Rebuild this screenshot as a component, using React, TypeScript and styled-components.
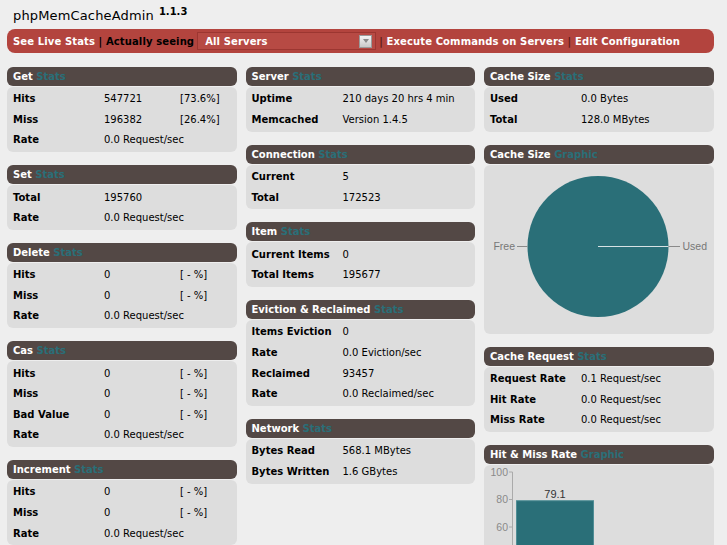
import React from "react";
import styled, { createGlobalStyle } from "styled-components";

const GlobalStyle = createGlobalStyle`
  html, body {
    margin: 0;
    padding: 0;
    background: #eeeeee;
    font-family: "DejaVu Sans", Verdana, sans-serif;
    color: #000;
  }
`;

const Page = styled.div`
  padding: 0 13px 0 7px;
`;

const Title = styled.div`
  height: 29px;
  box-sizing: border-box;
  padding: 7.5px 0 0 6px;
  font-size: 13px;
  line-height: 16px;
  letter-spacing: 0.15px;
  color: #000;
`;

const Version = styled.sup`
  font-size: 10px;
  font-weight: bold;
  letter-spacing: 0;
  margin-left: 5px;
  vertical-align: 5px;
  line-height: 0;
`;

const NavBar = styled.div`
  height: 24px;
  border-radius: 8px;
  background: #b3443e;
  display: flex;
  align-items: center;
  padding: 0 6px;
  font-size: 10px;
  font-weight: bold;
  letter-spacing: 0.12px;
  white-space: pre;
`;

const NavLink = styled.span`
  color: #ffffff;
`;

const NavText = styled.span<{ $tone?: "dark" | "red" }>`
  color: ${(p) => (p.$tone === "red" ? "#5e1a16" : "#000")};
`;

const SelectBox = styled.div`
  width: 179px;
  height: 18px;
  box-sizing: border-box;
  margin: 0 3px 0 3px;
  border: 1px solid #9c3631;
  background: #b74a44;
  display: flex;
  align-items: center;
  justify-content: space-between;
  padding: 0 3px 0 7px;
  color: #fff;
`;

const SelectArrow = styled.span`
  width: 13px;
  height: 13px;
  box-sizing: border-box;
  border: 1px solid #9a9a9a;
  background: linear-gradient(#f4f4f4, #c9c9c9);
  display: flex;
  align-items: center;
  justify-content: center;
  &::after {
    content: "";
    border-left: 3px solid transparent;
    border-right: 3px solid transparent;
    border-top: 4px solid #8a8a8a;
  }
`;

const Grid = styled.div`
  margin-top: 14px;
  display: grid;
  grid-template-columns: repeat(3, 1fr);
  column-gap: 9px;
  align-items: start;
`;

const Column = styled.div`
  display: flex;
  flex-direction: column;
`;

const Panel = styled.div`
  margin-bottom: 13px;
`;

const PanelHeader = styled.div`
  height: 19px;
  line-height: 19px;
  border-radius: 6px;
  background: #534845;
  color: #ffffff;
  font-size: 10px;
  font-weight: bold;
  padding-left: 6px;
`;

const Accent = styled.span`
  color: #2a6f78;
`;

const PanelBody = styled.div<{ $height?: number }>`
  margin-top: 1px;
  background: #dddddd;
  border-radius: 6px;
  padding: 1.5px 0 2px;
  ${(p) => (p.$height ? `height: ${p.$height}px; padding: 0; overflow: hidden;` : "")}
`;

const Row = styled.div`
  height: 20.6px;
  display: grid;
  grid-template-columns: 91px 76px 1fr;
  align-items: center;
  padding-left: 6px;
  font-size: 10px;
  white-space: nowrap;
`;

const Label = styled.span`
  font-weight: bold;
  color: #000;
`;

const Value = styled.span<{ $span?: boolean }>`
  color: #000;
  ${(p) => (p.$span ? "grid-column: span 2;" : "")}
`;

type RowData = [string, string, string?];

const StatPanel: React.FC<{ title: string; accent?: string; rows: RowData[] }> = ({
  title,
  accent = "Stats",
  rows,
}) => (
  <Panel>
    <PanelHeader>
      {title} <Accent>{accent}</Accent>
    </PanelHeader>
    <PanelBody>
      {rows.map(([l, v, p], i) => (
        <Row key={i}>
          <Label>{l}</Label>
          <Value $span={p === undefined}>{v}</Value>
          {p !== undefined && <Value>{p}</Value>}
        </Row>
      ))}
    </PanelBody>
  </Panel>
);

const ChartSvg = styled.svg`
  display: block;
  font-family: "Liberation Sans", Arial, sans-serif;
`;

const PieChart = () => (
  <ChartSvg width="230" height="169" viewBox="0 0 230 169">
    <circle cx="114" cy="81.5" r="70.5" fill="#2a6f78" />
    <line x1="114" y1="81.5" x2="184.5" y2="81.5" stroke="#d6e2e4" strokeWidth="1.2" />
    <line x1="184.5" y1="81.5" x2="196" y2="81.5" stroke="#8a8a8a" strokeWidth="1" />
    <line x1="33" y1="81.5" x2="43.5" y2="81.5" stroke="#8a8a8a" strokeWidth="1" />
    <text x="31" y="85" fontSize="10.5" fill="#777" textAnchor="end">Free</text>
    <text x="198.5" y="85" fontSize="10.5" fill="#777">Used</text>
  </ChartSvg>
);

const BarChart = () => {
  const y0 = 144.5;
  const k = 1.375;
  const ticks = [100, 80, 60, 40, 20, 0];
  return (
    <ChartSvg width="230" height="170" viewBox="0 0 230 170">
      <line x1="28.5" y1="7" x2="28.5" y2={y0} stroke="#aaa" strokeWidth="1" />
      {ticks.map((t) => {
        const y = y0 - t * k;
        return (
          <g key={t}>
            <line x1="25" y1={y} x2="28.5" y2={y} stroke="#aaa" strokeWidth="1" />
            <text x="24" y={y + 3.5} fontSize="10.5" fill="#8a8a8a" textAnchor="end">
              {t}
            </text>
          </g>
        );
      })}
      <rect x="32.5" y={y0 - 79.1 * k} width="77" height={79.1 * k} fill="#2a6f78" stroke="#4f8d95" strokeWidth="1" />
      <text x="71" y={y0 - 79.1 * k - 3} fontSize="11" fill="#333" textAnchor="middle">79.1</text>
      <rect x="118.5" y={y0 - 20.9 * k} width="77" height={20.9 * k} fill="#b3443e" />
      <text x="157" y={y0 - 20.9 * k - 3} fontSize="11" fill="#333" textAnchor="middle">20.9</text>
    </ChartSvg>
  );
};

const GraphPanel: React.FC<{ title: string; height: number; children: React.ReactNode }> = ({
  title,
  height,
  children,
}) => (
  <Panel>
    <PanelHeader>
      {title} <Accent>Graphic</Accent>
    </PanelHeader>
    <PanelBody $height={height}>{children}</PanelBody>
  </Panel>
);

export default function App() {
  return (
    <Page>
      <GlobalStyle />
      <Title>
        phpMemCacheAdmin<Version>1.1.3</Version>
      </Title>
      <NavBar>
        <NavLink>See Live Stats</NavLink>
        <NavText> | Actually seeing</NavText>
        <SelectBox>
          <span>All Servers</span>
          <SelectArrow />
        </SelectBox>
        <NavText $tone="red">| </NavText>
        <NavLink>Execute Commands on Servers</NavLink>
        <NavText $tone="red"> | </NavText>
        <NavLink>Edit Configuration</NavLink>
      </NavBar>
      <Grid>
        <Column>
          <StatPanel
            title="Get"
            rows={[
              ["Hits", "547721", "[73.6%]"],
              ["Miss", "196382", "[26.4%]"],
              ["Rate", "0.0 Request/sec"],
            ]}
          />
          <StatPanel
            title="Set"
            rows={[
              ["Total", "195760"],
              ["Rate", "0.0 Request/sec"],
            ]}
          />
          <StatPanel
            title="Delete"
            rows={[
              ["Hits", "0", "[ - %]"],
              ["Miss", "0", "[ - %]"],
              ["Rate", "0.0 Request/sec"],
            ]}
          />
          <StatPanel
            title="Cas"
            rows={[
              ["Hits", "0", "[ - %]"],
              ["Miss", "0", "[ - %]"],
              ["Bad Value", "0", "[ - %]"],
              ["Rate", "0.0 Request/sec"],
            ]}
          />
          <StatPanel
            title="Increment"
            rows={[
              ["Hits", "0", "[ - %]"],
              ["Miss", "0", "[ - %]"],
              ["Rate", "0.0 Request/sec"],
            ]}
          />
        </Column>
        <Column>
          <StatPanel
            title="Server"
            rows={[
              ["Uptime", "210 days 20 hrs 4 min"],
              ["Memcached", "Version 1.4.5"],
            ]}
          />
          <StatPanel
            title="Connection"
            rows={[
              ["Current", "5"],
              ["Total", "172523"],
            ]}
          />
          <StatPanel
            title="Item"
            rows={[
              ["Current Items", "0"],
              ["Total Items", "195677"],
            ]}
          />
          <StatPanel
            title="Eviction & Reclaimed"
            rows={[
              ["Items Eviction", "0"],
              ["Rate", "0.0 Eviction/sec"],
              ["Reclaimed", "93457"],
              ["Rate", "0.0 Reclaimed/sec"],
            ]}
          />
          <StatPanel
            title="Network"
            rows={[
              ["Bytes Read", "568.1 MBytes"],
              ["Bytes Written", "1.6 GBytes"],
            ]}
          />
        </Column>
        <Column>
          <StatPanel
            title="Cache Size"
            rows={[
              ["Used", "0.0 Bytes"],
              ["Total", "128.0 MBytes"],
            ]}
          />
          <GraphPanel title="Cache Size" height={169}>
            <PieChart />
          </GraphPanel>
          <StatPanel
            title="Cache Request"
            rows={[
              ["Request Rate", "0.1 Request/sec"],
              ["Hit Rate", "0.0 Request/sec"],
              ["Miss Rate", "0.0 Request/sec"],
            ]}
          />
          <GraphPanel title="Hit & Miss Rate" height={170}>
            <BarChart />
          </GraphPanel>
        </Column>
      </Grid>
    </Page>
  );
}
